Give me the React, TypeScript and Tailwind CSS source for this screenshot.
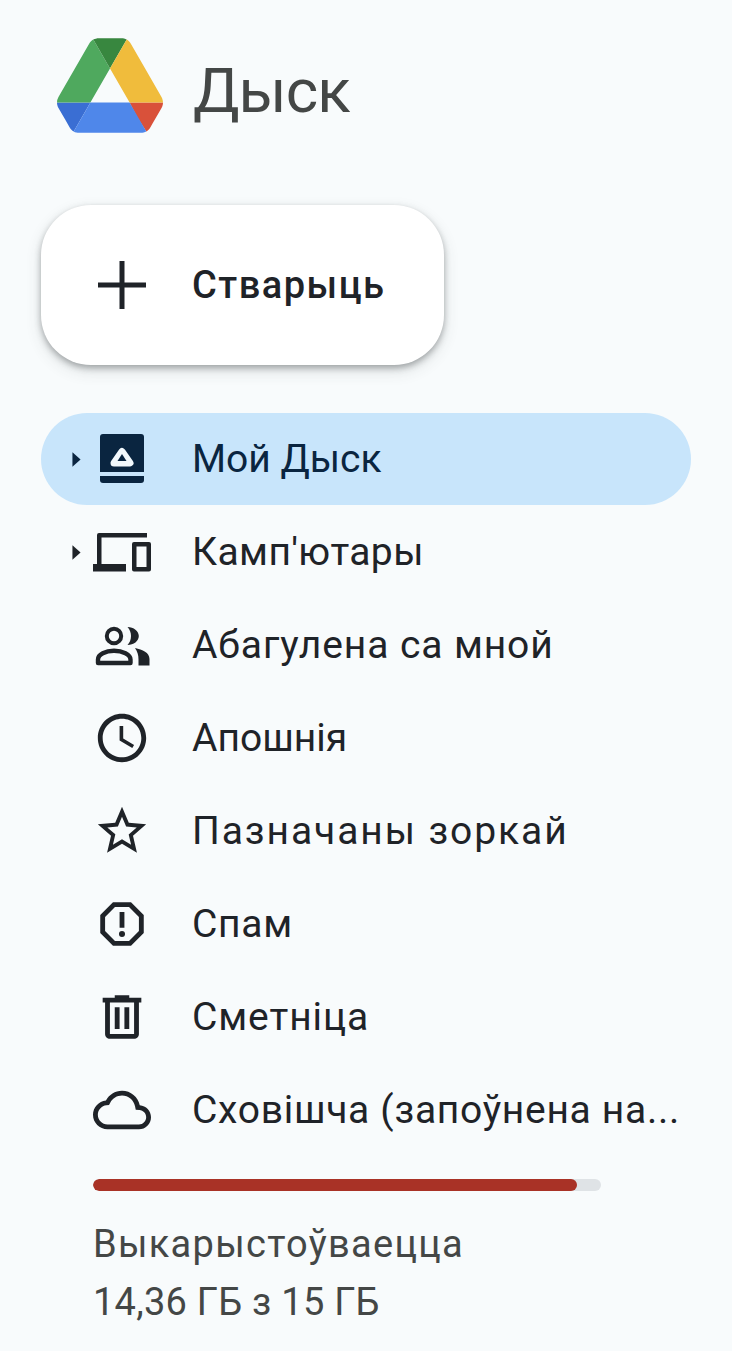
const P = {
  clock: "M11.99 2C6.47 2 2 6.48 2 12s4.47 10 9.99 10C17.52 22 22 17.52 22 12S17.52 2 11.99 2zM12 20c-4.42 0-8-3.58-8-8s3.58-8 8-8 8 3.58 8 8-3.58 8-8 8zm.5-13H11v6l5.25 3.15.75-1.23-4.5-2.67z",
  star: "M22 9.24l-7.19-.62L12 2 9.19 8.63 2 9.24l5.46 4.73L5.82 21 12 17.27 18.18 21l-1.63-7.03L22 9.24zM12 15.4l-3.76 2.27 1-4.28-3.32-2.88 4.38-.38L12 6.1l1.71 4.04 4.38.38-3.32 2.88 1 4.28L12 15.4z",
  spam: "M15.73 3H8.27L3 8.27v7.46L8.27 21h7.46L21 15.73V8.27L15.73 3zM19 14.9L14.9 19H9.1L5 14.9V9.1L9.1 5h5.8L19 9.1v5.8zM11 7h2v6.5h-2zM12 14.9a1.25 1.25 0 1 0 0 2.5 1.25 1.25 0 0 0 0-2.5z",
  trash: "M15 4V3H9v1H4v2h1v13c0 1.1.9 2 2 2h10c1.1 0 2-.9 2-2V6h1V4h-5zm2 15H7V6h10v13zM9 8h2v9H9zm4 0h2v9h-2z",
  cloud: "M19.35 10.04C18.67 6.59 15.64 4 12 4 9.11 4 6.6 5.64 5.35 8.04 2.34 8.36 0 10.91 0 14c0 3.31 2.69 6 6 6h13c2.76 0 5-2.24 5-5 0-2.64-2.05-4.78-4.65-4.96zM19 18H6c-2.21 0-4-1.79-4-4 0-2.05 1.53-3.76 3.56-3.97l1.07-.11.5-.95C8.08 7.14 9.94 6 12 6c2.62 0 4.88 1.86 5.39 4.43l.3 1.5 1.53.11c1.56.1 2.78 1.41 2.78 2.96 0 1.65-1.35 3-3 3z",
};

function Mat({ d }: { d: string }) {
  return (
    <svg viewBox="0 0 24 24" className="w-[58px] h-[58px]" fill="currentColor">
      <path d={d} fillRule="evenodd" />
    </svg>
  );
}

function Devices() {
  return (
    <svg viewBox="0 0 58 58" className="w-[58px] h-[58px]" fill="currentColor">
      <path d="M6 10h48v4.500H8.500V41H33v7.500H0V41h4V12a2 2 0 0 1 2-2z" />
      <path fillRule="evenodd" d="M41 19h15a2 2 0 0 1 2 2v25.500a2 2 0 0 1-2 2H41a2 2 0 0 1-2-2V21a2 2 0 0 1 2-2zm2.500 4.500v20.500h10V23.500z" />
    </svg>
  );
}

function People() {
  return (
    <svg viewBox="0 0 58 58" className="w-[58px] h-[58px]" fill="none" stroke="currentColor">
      <circle cx="21" cy="20" r="7.200" strokeWidth="4" />
      <path d="M5 47v-3.500c0-5 7.500-8.700 16-8.700s16.500 3.700 16.500 8.700V47z" strokeWidth="4.400" strokeLinejoin="round" />
      <path d="M34.500 11c6.200 0 11.300 4 11.300 9s-5.100 9-11.300 9c2.300-2.500 3.500-5.500 3.500-9s-1.200-6.500-3.500-9z" fill="currentColor" stroke="none" />
      <path d="M42 32c7.500 1.500 14.500 4.500 14.500 11V49.500H45.500v-6c0-4.500-1-8-3.500-11.500z" fill="currentColor" stroke="none" />
    </svg>
  );
}

function MyDrive() {
  return (
    <svg viewBox="0 0 58 58" className="w-[58px] h-[58px]">
      <path d="M10 4h38a3 3 0 0 1 3 3v35H7V7a3 3 0 0 1 3-3z" fill="#0a2540" />
      <path d="M7 46h44v4a3 3 0 0 1-3 3H10a3 3 0 0 1-3-3z" fill="#0a2540" />
      <path d="M29 21.500l8 11.500H21z" fill="#f2f8fc" stroke="#f2f8fc" strokeWidth="7" strokeLinejoin="round" />
      <path d="M29 24l4.500 7h-9z" fill="#0a2540" />
    </svg>
  );
}

function Arrow() {
  return (
    <svg viewBox="0 0 10 16" className="w-[9px] h-[17px]" fill="currentColor">
      <path d="M0.500 0l9 8-9 8z" />
    </svg>
  );
}

function DriveLogo() {
  return (
    <svg viewBox="0 0 87.300 78" className="w-[106px] h-[95px]">
      <path d="m6.600 66.850 3.850 6.650c.8 1.400 1.950 2.500 3.300 3.300l13.750-23.800h-27.500c0 1.550.4 3.100 1.200 4.500z" fill="#3a6ed3" />
      <path d="m43.650 25-13.750-23.800c-1.350.8-2.500 1.900-3.300 3.300l-25.400 44a9.060 9.060 0 0 0 -1.200 4.500h27.500z" fill="#4fa95e" />
      <path d="m73.550 76.800c1.350-.8 2.500-1.900 3.300-3.300l1.600-2.750 7.650-13.250c.8-1.400 1.200-2.950 1.200-4.500h-27.502l5.852 11.500z" fill="#d9513a" />
      <path d="m43.650 25 13.750-23.800c-1.350-.8-2.900-1.200-4.500-1.200h-18.500c-1.600 0-3.150.45-4.500 1.200z" fill="#38873f" />
      <path d="m59.800 53h-32.300l-13.750 23.800c1.350.8 2.900 1.200 4.500 1.200h50.800c1.600 0 3.150-.45 4.500-1.200z" fill="#4f87ea" />
      <path d="m73.400 26.500-12.700-22c-.8-1.400-1.950-2.500-3.300-3.300l-13.750 23.800 16.150 28h27.450c0-1.550-.4-3.100-1.200-4.500z" fill="#f0bc3c" />
    </svg>
  );
}

function Row({ icon, label, arrow, active, track }: { icon: React.ReactNode; label: string; arrow?: boolean; active?: boolean; track?: string }) {
  return (
    <div className={`flex items-center h-[92px] w-[650px] rounded-full ${active ? "bg-[#c8e5fb] text-[#0a2540]" : "text-[#1f2328]"}`}>
      <div className="w-[31px] shrink-0" />
      <div className="w-[21px] shrink-0 flex">{arrow ? <Arrow /> : null}</div>
      <div className="w-[58px] h-[58px] shrink-0">{icon}</div>
      <div className={`ml-[41px] text-[39px] leading-[46px] whitespace-nowrap ${track ?? ""}`}>{label}</div>
    </div>
  );
}

export default function App() {
  return (
    <div className="w-[732px] h-[1351px] overflow-hidden bg-[#f8fbfc] font-['Roboto',sans-serif]">
      <div className="flex items-center pt-[38px] pl-[57px]">
        <DriveLogo />
        <span className="block h-[95px] ml-[30px] text-[62px] leading-[105px] tracking-[-1px] text-[#444746]">Дыск</span>
      </div>
      <button className="mt-[72px] ml-[41px] w-[403px] h-[160px] flex items-center rounded-[50px] bg-white shadow-[0_3px_6px_rgba(60,64,67,0.4),0_6px_16px_rgba(60,64,67,0.14)] text-[#1f2328]">
        <svg viewBox="0 0 48 48" className="ml-[57px] w-[48px] h-[48px]" fill="currentColor">
          <path d="M21.500 0h5v21.500H48v5H26.500V48h-5V26.500H0v-5h21.500z" />
        </svg>
        <span className="ml-[46px] text-[38px] font-medium leading-[46px] tracking-[1.5px]">Стварыць</span>
      </button>
      <div className="mt-[48px] ml-[41px] flex flex-col gap-px">
        <Row active arrow icon={<MyDrive />} label="Мой Дыск" />
        <Row arrow icon={<Devices />} label="Камп'ютары" track="tracking-[0.4px]" />
        <Row icon={<People />} label="Абагулена са мной" track="tracking-[0.9px]" />
        <Row icon={<Mat d={P.clock} />} label="Апошнія" />
        <Row icon={<Mat d={P.star} />} label="Пазначаны зоркай" track="tracking-[1.9px]" />
        <Row icon={<Mat d={P.spam} />} label="Спам" track="tracking-[0.7px]" />
        <Row icon={<Mat d={P.trash} />} label="Сметніца" track="tracking-[0.9px]" />
        <Row icon={<Mat d={P.cloud} />} label="Сховішча (запоўнена на..." track="tracking-[0.7px]" />
      </div>
      <div className="mt-[23px] ml-[93px] w-[508px] h-[12px] rounded-full bg-[#dfe3e6] overflow-hidden">
        <div className="h-full w-[484px] rounded-full bg-[#a93226]" />
      </div>
      <div className="mt-[24px] ml-[93px] text-[38px] leading-[58px] text-[#444746]">
        <div className="tracking-[1.3px]">Выкарыстоўваецца</div>
        <div className="tracking-[0.25px]">14,36 ГБ з 15 ГБ</div>
      </div>
    </div>
  );
}
